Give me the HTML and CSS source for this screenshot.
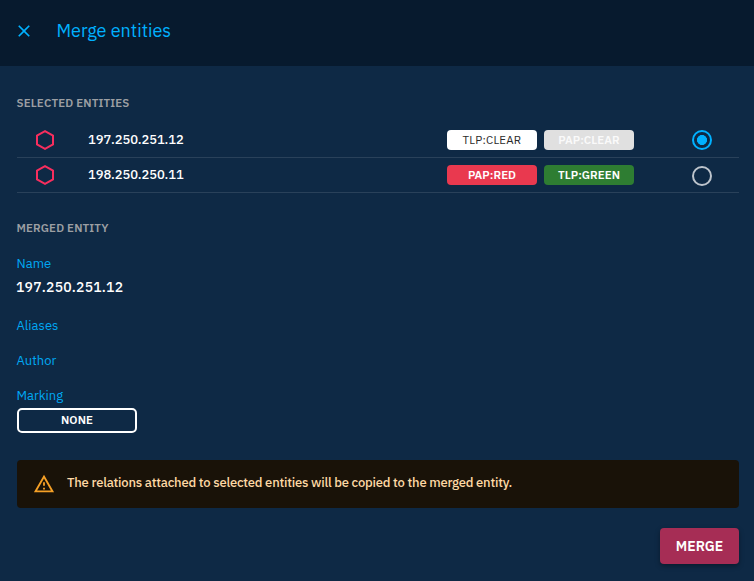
FILE: index.html
```html
<!DOCTYPE html>
<html lang="en">
<head>
<meta charset="utf-8">
<title>Merge entities</title>
<link rel="stylesheet" href="styles.css">
</head>
<body>
<header class="header">
  <svg class="close" viewBox="0 0 24 24"><path d="M19 6.41 17.59 5 12 10.59 6.41 5 5 6.41 10.59 12 5 17.59 6.41 19 12 13.41 17.59 19 19 17.59 13.41 12z"/></svg>
  <h1 class="title">Merge entities</h1>
</header>
<main class="content">
  <h2 class="section selected">SELECTED ENTITIES</h2>
  <ul class="list">
    <li class="row">
      <svg class="hex" viewBox="0 0 24 24"><path d="M12 3.1 20 7.55V16.45L12 20.9 4 16.45V7.55Z"/></svg>
      <span class="entity">197.250.251.12</span>
      <span class="chips"><span class="chip clear">TLP:CLEAR</span><span class="chip pap">PAP:CLEAR</span></span>
      <span class="radio checked"></span>
    </li>
    <li class="row">
      <svg class="hex" viewBox="0 0 24 24"><path d="M12 3.1 20 7.55V16.45L12 20.9 4 16.45V7.55Z"/></svg>
      <span class="entity">198.250.250.11</span>
      <span class="chips"><span class="chip red">PAP:RED</span><span class="chip green">TLP:GREEN</span></span>
      <span class="radio"></span>
    </li>
  </ul>
  <h2 class="section merged">MERGED ENTITY</h2>
  <h3 class="label name">Name</h3>
  <div class="value">197.250.251.12</div>
  <h3 class="label aliases">Aliases</h3>
  <h3 class="label author">Author</h3>
  <h3 class="label marking">Marking</h3>
  <div class="none">NONE</div>
  <div class="alert">
    <svg class="warn" viewBox="0 0 24 24"><path d="M12 5.99 19.53 19H4.47L12 5.99M12 2 1 21h22L12 2zm1 14h-2v2h2v-2zm0-6h-2v4h2v-4z"/></svg>
    <span class="message">The relations attached to selected entities will be copied to the merged entity.</span>
  </div>
  <div class="actions"><button class="merge"><span>MERGE</span></button></div>
</main>
</body>
</html>
```
FILE: styles.css
```css
* { box-sizing: border-box; }
body {
  margin: 0;
  height: 581px;
  overflow: hidden;
  background: #0e2945;
  color: #fff;
  font-family: "IBM Plex Sans", Roboto, sans-serif;
}
h1, h2, h3, ul { margin: 0; padding: 0; }
.header {
  display: flex;
  align-items: center;
  height: 66px;
  padding: 0 14px 4px;
  background: #071a2e;
  color: #00b1ff;
}
.close { width: 20px; height: 20px; fill: currentColor; }
.title { margin-left: 22.5px; font-size: 18px; font-weight: 400; line-height: 24px; }
.content { padding: 28px 15px 0 17px; }
.section {
  height: 18px;
  margin-left: -0.5px;
  font-size: 11.5px;
  line-height: 17px;
  font-weight: 600;
  letter-spacing: 0.15px;
  color: #9c9fa3;
}
.list { margin-top: 11px; list-style: none; }
.row {
  display: grid;
  grid-template-columns: 71px 359px 1fr 37px;
  align-items: center;
  height: 35px;
  border-bottom: 1px solid #29415a;
}
.hex { width: 24px; height: 24px; margin-left: 16px; fill: none; stroke: #f72e5e; stroke-width: 2; }
.entity { font-size: 13px; font-weight: 500; line-height: 18px; letter-spacing: -0.1px; }
.chips { display: flex; gap: 7px; }
.chip {
  width: 90px;
  height: 20px;
  border-radius: 4px;
  font-size: 11.5px;
  font-weight: 600;
  line-height: 20px;
  letter-spacing: 0.05px;
  text-align: center;
}
.clear { background: #fff; color: #2b2b2b; font-weight: 400; letter-spacing: 0.2px; }
.pap { background: #e0e0e0; color: #fafafa; }
.red { background: #e9394f; }
.green { background: #2e7d32; }
.radio { width: 20px; height: 20px; border: 2px solid #bdc4cc; border-radius: 50%; justify-self: end; margin-right: 27px; }
.row:last-child .radio { margin-top: 2px; }
.checked { border-color: #00b1ff; background: radial-gradient(circle, #00b1ff 4.7px, transparent 5.3px); }
.merged { margin-top: 26px; }
.label { height: 20px; margin-left: -0.5px; font-size: 13px; font-weight: 400; line-height: 20px; color: #00a8f3; }
.name { margin-top: 17px; }
.value { height: 20px; margin-top: 3px; margin-left: -1px; font-size: 14px; font-weight: 500; line-height: 20px; letter-spacing: 0.2px; }
.aliases { margin-top: 19px; }
.author, .marking { margin-top: 15px; }
.none {
  width: 120px;
  height: 25px;
  margin-top: 2px;
  border: 2px solid #fff;
  border-radius: 5px;
  font-size: 11.5px;
  font-weight: 600;
  line-height: 19px;
  letter-spacing: 0.1px;
  text-align: center;
}
.alert {
  display: flex;
  align-items: center;
  height: 48px;
  margin-top: 27px;
  padding-left: 16px;
  border-radius: 4px;
  background: #191208;
  color: #ffd9a5;
}
.warn { width: 22px; height: 22px; fill: #f5a026; }
.message { margin: -3px 0 0 12px; font-size: 13px; font-weight: 500; letter-spacing: -0.21px; white-space: nowrap; }
.actions { display: flex; justify-content: flex-end; margin-top: 20px; }
.merge {
  width: 79px;
  height: 36px;
  padding: 0;
  border: 0;
  border-radius: 4px;
  background: #a62d55;
  color: #fff;
  font: 600 14px "IBM Plex Sans", Roboto, sans-serif;
  box-shadow: 0 2px 5px rgba(0, 0, 0, .35);
}
```
